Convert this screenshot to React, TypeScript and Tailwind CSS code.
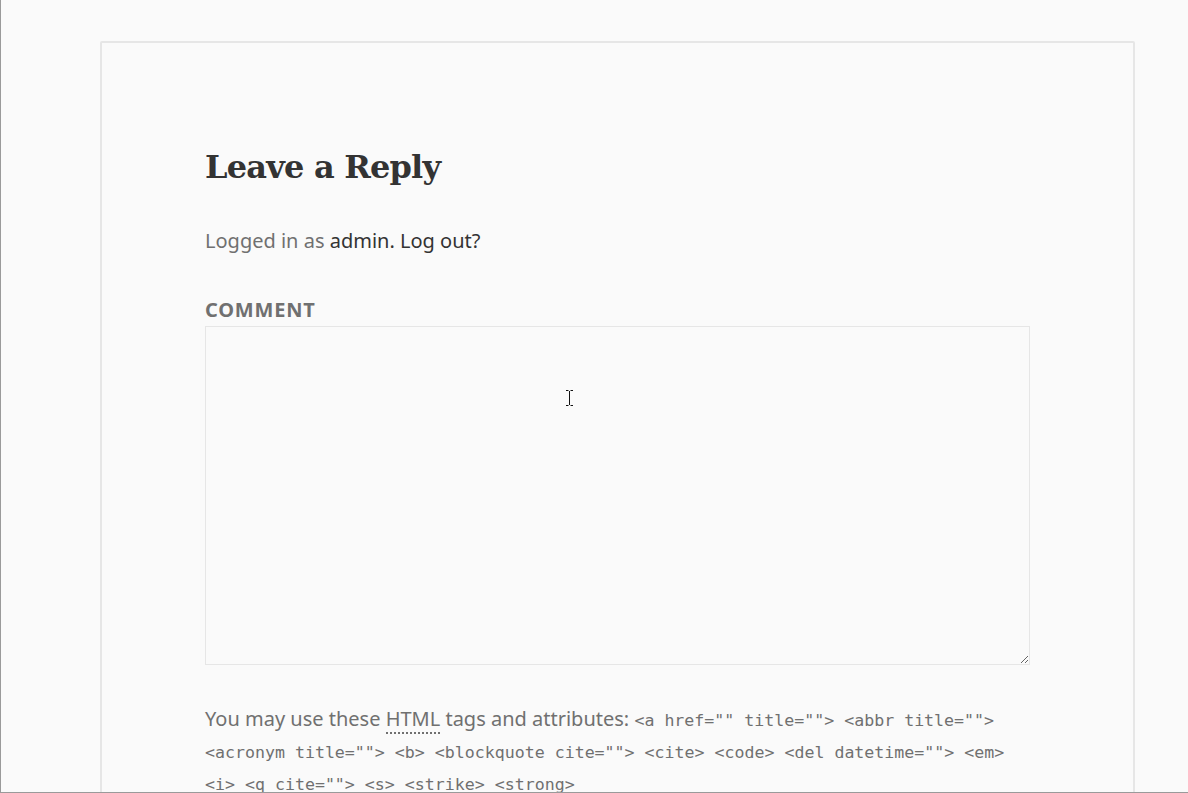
import React from "react";

export default function App() {
  const mono = { fontFamily: '"DejaVu Sans Mono", "Liberation Mono", monospace' };
  return (
    <div
      className="w-[1188px] h-[793px] bg-[#fafafa] border-l border-b border-[#9a9a9a] overflow-hidden relative"
      style={{ fontFamily: '"Noto Sans", "Open Sans", sans-serif' }}
    >
      <div className="mt-[41px] ml-[99px] w-[1035px] h-[800px] border-2 border-[#e6e6e6] rounded-[2px] bg-[#fafafa] px-[103px] pt-[104px]">
        <h3
          className="text-[32px] leading-[40px] tracking-[-0.8px] font-bold text-[#333333] m-0"
          style={{ fontFamily: '"DejaVu Serif", "Liberation Serif", serif' }}
        >
          Leave a Reply
        </h3>
        <p className="mt-[38px] text-[20px] leading-[32px] text-[#707070]">
          Logged in as <a className="text-[#333333]">admin</a>
          <span className="text-[#333333]">.</span> <a className="text-[#333333]">Log out?</a>
        </p>
        <label className="block mt-[37px] text-[20px] leading-[32px] font-bold uppercase tracking-[0.04em] text-[#707070]">
          Comment
        </label>
        <textarea className="block w-[825px] h-[339px] border border-[#e6e6e6] bg-[#fafafa] outline-none" />
        <p className="mt-[38px] text-[20px] leading-[32px] text-[#707070]">
          You may use these{" "}
          <abbr title="HyperText Markup Language" className="no-underline border-b-2 border-dotted border-[#707070]">
            HTML
          </abbr>{" "}
          tags and attributes:{" "}
          <code className="text-[16.6px] leading-none" style={mono}>
            &lt;a href="" title=""&gt; &lt;abbr title=""&gt; &lt;acronym title=""&gt; &lt;b&gt; &lt;blockquote cite=""&gt; &lt;cite&gt; &lt;code&gt; &lt;del datetime=""&gt; &lt;em&gt; &lt;i&gt; &lt;q cite=""&gt; &lt;s&gt; &lt;strike&gt; &lt;strong&gt;
          </code>
        </p>
      </div>
      <svg className="absolute left-[564px] top-[389px]" width="9" height="18" viewBox="0 0 9 18">
        <path d="M1 1.5h2.5M5.5 1.5H8M4.5 2v14M1 16.5h2.5M5.5 16.5H8" stroke="#111" strokeWidth="1" fill="none" />
      </svg>
    </div>
  );
}
